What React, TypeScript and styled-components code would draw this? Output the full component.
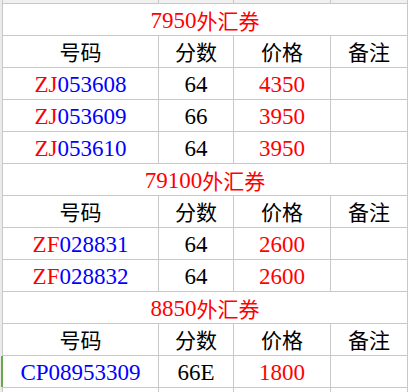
import React from 'react'
import styled, { createGlobalStyle } from 'styled-components'

const GlobalStyle = createGlobalStyle`
  html, body {
    margin: 0;
    background: #ffffff;
    overflow: hidden;
  }
`

const Page = styled.div`
  padding-left: 2px;
  background: linear-gradient(to right, #ebebeb 2px, #ffffff 2px);
  height: 392px;
  overflow: hidden;
`

const Sheet = styled.div`
  display: grid;
  grid-template-columns: 155px 74px 96px 76px;
  grid-template-rows: 3px;
  grid-auto-rows: 31px;
  gap: 1px;
  padding: 0 1px 1px 1px;
  background: #c8c8c8;
  width: max-content;
`

const Cell = styled.div<{ selected?: boolean; stub?: boolean }>`
  background: ${({ stub }) => (stub ? '#f0f0f0' : '#ffffff')};
  display: flex;
  align-items: center;
  justify-content: center;
  font-family: 'Liberation Serif', 'DejaVu Serif', serif;
  font-size: 23px;
  line-height: 1;
  padding-top: 2px;
  white-space: nowrap;
  color: #000000;
  box-shadow: ${({ selected }) => (selected ? '-2px 0 0 #6aa84f' : 'none')};
`

const TitleCell = styled(Cell)`
  grid-column: 1 / -1;
  color: #ff0000;
`

const Cjk = styled.span`
  font-family: 'Noto Sans CJK SC', sans-serif;
  font-size: 21px;
`

const HeadCell = styled(Cell)`
  padding-top: 0;
`

const Red = styled.span`
  color: #ff0000;
`

const Blue = styled.span`
  color: #0000ff;
`

type Row = { prefix: string; code: string; score: string; price: string }

const sections: { title: string; rows: Row[] }[] = [
  {
    title: '7950',
    rows: [
      { prefix: 'ZJ', code: '053608', score: '64', price: '4350' },
      { prefix: 'ZJ', code: '053609', score: '66', price: '3950' },
      { prefix: 'ZJ', code: '053610', score: '64', price: '3950' },
    ],
  },
  {
    title: '79100',
    rows: [
      { prefix: 'ZF', code: '028831', score: '64', price: '2600' },
      { prefix: 'ZF', code: '028832', score: '64', price: '2600' },
    ],
  },
  {
    title: '8850',
    rows: [{ prefix: '', code: 'CP08953309', score: '66E', price: '1800' }],
  },
]

const headers = ['号码', '分数', '价格', '备注']

export default function App() {
  return (
    <Page>
      <GlobalStyle />
      <Sheet>
        {[0, 1, 2, 3].map((i) => (
          <Cell key={`stub-${i}`} stub />
        ))}
        {sections.map((s, si) => (
          <React.Fragment key={s.title}>
            <TitleCell>
              {s.title}
              <Cjk>外汇券</Cjk>
            </TitleCell>
            {headers.map((h) => (
              <HeadCell key={h}>
                <Cjk>{h}</Cjk>
              </HeadCell>
            ))}
            {s.rows.map((r) => (
              <React.Fragment key={r.prefix + r.code}>
                <Cell selected={si === sections.length - 1}>
                  <Red>{r.prefix}</Red>
                  <Blue>{r.code}</Blue>
                </Cell>
                <Cell>{r.score}</Cell>
                <Cell>
                  <Red>{r.price}</Red>
                </Cell>
                <Cell />
              </React.Fragment>
            ))}
          </React.Fragment>
        ))}
        {[0, 1, 2, 3].map((i) => (
          <Cell key={`tail-${i}`} />
        ))}
      </Sheet>
    </Page>
  )
}
